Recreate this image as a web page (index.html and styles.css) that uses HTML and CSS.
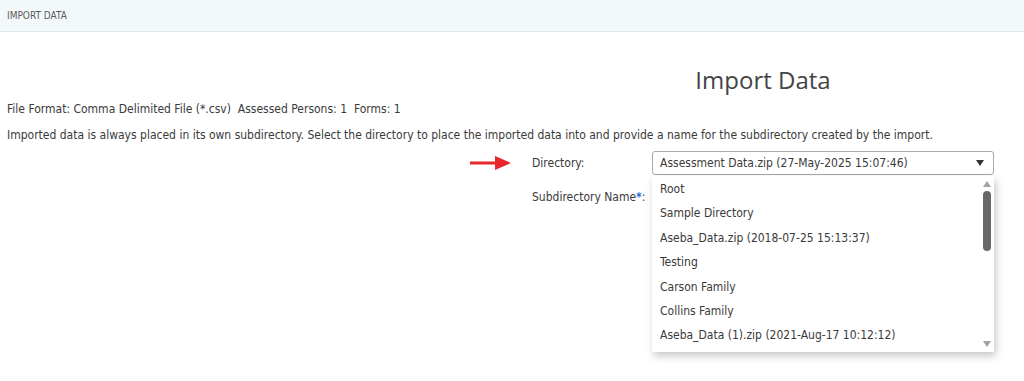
FILE: index.html
```html
<!DOCTYPE html>
<html>
<head>
    <title>Import Data</title>
    <link rel="stylesheet" href="styles.css">
</head>
<body>
    <div class="topbar">IMPORT DATA</div>

    <div class="page">
        <div class="title-row">
            <h1>Import Data</h1>
        </div>

        <p class="info">File Format: Comma Delimited File (*.csv)&nbsp; Assessed Persons: 1&nbsp; Forms: 1</p>
        <p class="info">Imported data is always placed in its own subdirectory. Select the directory to place the imported data into and provide a name for the subdirectory created by the import.</p>

        <div class="form">
            <div class="row">
                <div class="arrow">
                    <svg width="42" height="14" viewBox="0 0 42 14">
                        <rect x="0" y="5.5" width="27" height="3" fill="#e8262b"/>
                        <polygon points="25,0 41,7 25,14" fill="#e8262b"/>
                    </svg>
                </div>
                <label class="label">Directory:</label>
                <div class="select-wrap">
                    <div class="select">
                        <span>Assessment Data.zip (27-May-2025 15:07:46)</span>
                        <span class="caret"></span>
                    </div>
                    <div class="dropdown">
                        <ul class="options">
                            <li>Root</li>
                            <li>Sample Directory</li>
                            <li>Aseba_Data.zip (2018-07-25 15:13:37)</li>
                            <li>Testing</li>
                            <li>Carson Family</li>
                            <li>Collins Family</li>
                            <li>Aseba_Data (1).zip (2021-Aug-17 10:12:12)</li>
                        </ul>
                        <div class="scrollbar">
                            <span class="sb-up"></span>
                            <span class="sb-thumb"></span>
                            <span class="sb-down"></span>
                        </div>
                    </div>
                </div>
            </div>
            <div class="row">
                <div class="arrow"></div>
                <label class="label">Subdirectory Name<span class="req">*</span>:</label>
            </div>
        </div>
    </div>
</body>
</html>
```

FILE: styles.css
```css
body {
    margin: 0;
    font-family: "DejaVu Sans Condensed", Tahoma, sans-serif;
    font-size: 12px;
    color: #3a3a3a;
    background-color: #fff;
}

.topbar {
    height: 31px;
    line-height: 31px;
    padding-left: 7px;
    font-size: 10px;
    color: #5a5a5a;
    background-color: #f3f9fa;
    border-bottom: 1px solid #e3e9ea;
}

.page {
    padding: 32px 7px 0;
    min-height: 345px;
    box-sizing: border-box;
}

.title-row {
    padding-left: 525px;
    width: 462px;
    text-align: center;
}

h1 {
    margin: 0;
    font-family: "Open Sans", sans-serif;
    font-size: 24px;
    font-weight: normal;
    color: #444;
    line-height: 32px;
}

.info {
    margin: 0;
    line-height: 26px;
}

.form {
    margin-top: 3px;
}

.row {
    display: flex;
    align-items: flex-start;
    margin-bottom: 10px;
}

.arrow {
    width: 525px;
    display: flex;
    justify-content: flex-end;
    padding-top: 5px;
    box-sizing: border-box;
    padding-right: 20px;
}

.label {
    width: 120px;
    line-height: 24px;
}

.req {
    color: #1f6fd6;
    font-weight: bold;
}

.select-wrap {
    position: relative;
    width: 342px;
}

.select {
    height: 24px;
    box-sizing: border-box;
    border: 1px solid #a9a9a9;
    border-radius: 3px;
    padding: 0 9px 0 7px;
    display: flex;
    align-items: center;
    justify-content: space-between;
}

.caret {
    width: 0;
    height: 0;
    border-left: 4px solid transparent;
    border-right: 4px solid transparent;
    border-top: 6px solid #333;
}

.dropdown {
    position: absolute;
    top: 25px;
    left: 0;
    width: 342px;
    height: 176px;
    background-color: #fff;
    box-shadow: 2px 4px 8px rgba(0, 0, 0, 0.22);
    display: flex;
    z-index: 2;
}

.options {
    list-style: none;
    margin: 0;
    padding: 1px 0 0;
    flex: 1;
}

.options li {
    height: 24.4px;
    line-height: 24px;
    padding-left: 8px;
}

.scrollbar {
    width: 14px;
    display: flex;
    flex-direction: column;
    align-items: center;
    padding-top: 5px;
    box-sizing: border-box;
}

.sb-up {
    width: 0;
    height: 0;
    border-left: 4px solid transparent;
    border-right: 4px solid transparent;
    border-bottom: 6px solid #a3a3a3;
}

.sb-thumb {
    width: 8px;
    height: 60px;
    margin-top: 4px;
    border-radius: 4px;
    background-color: #686868;
}

.sb-down {
    width: 0;
    height: 0;
    margin-top: auto;
    margin-bottom: 5px;
    border-left: 4px solid transparent;
    border-right: 4px solid transparent;
    border-top: 6px solid #a3a3a3;
}
```
